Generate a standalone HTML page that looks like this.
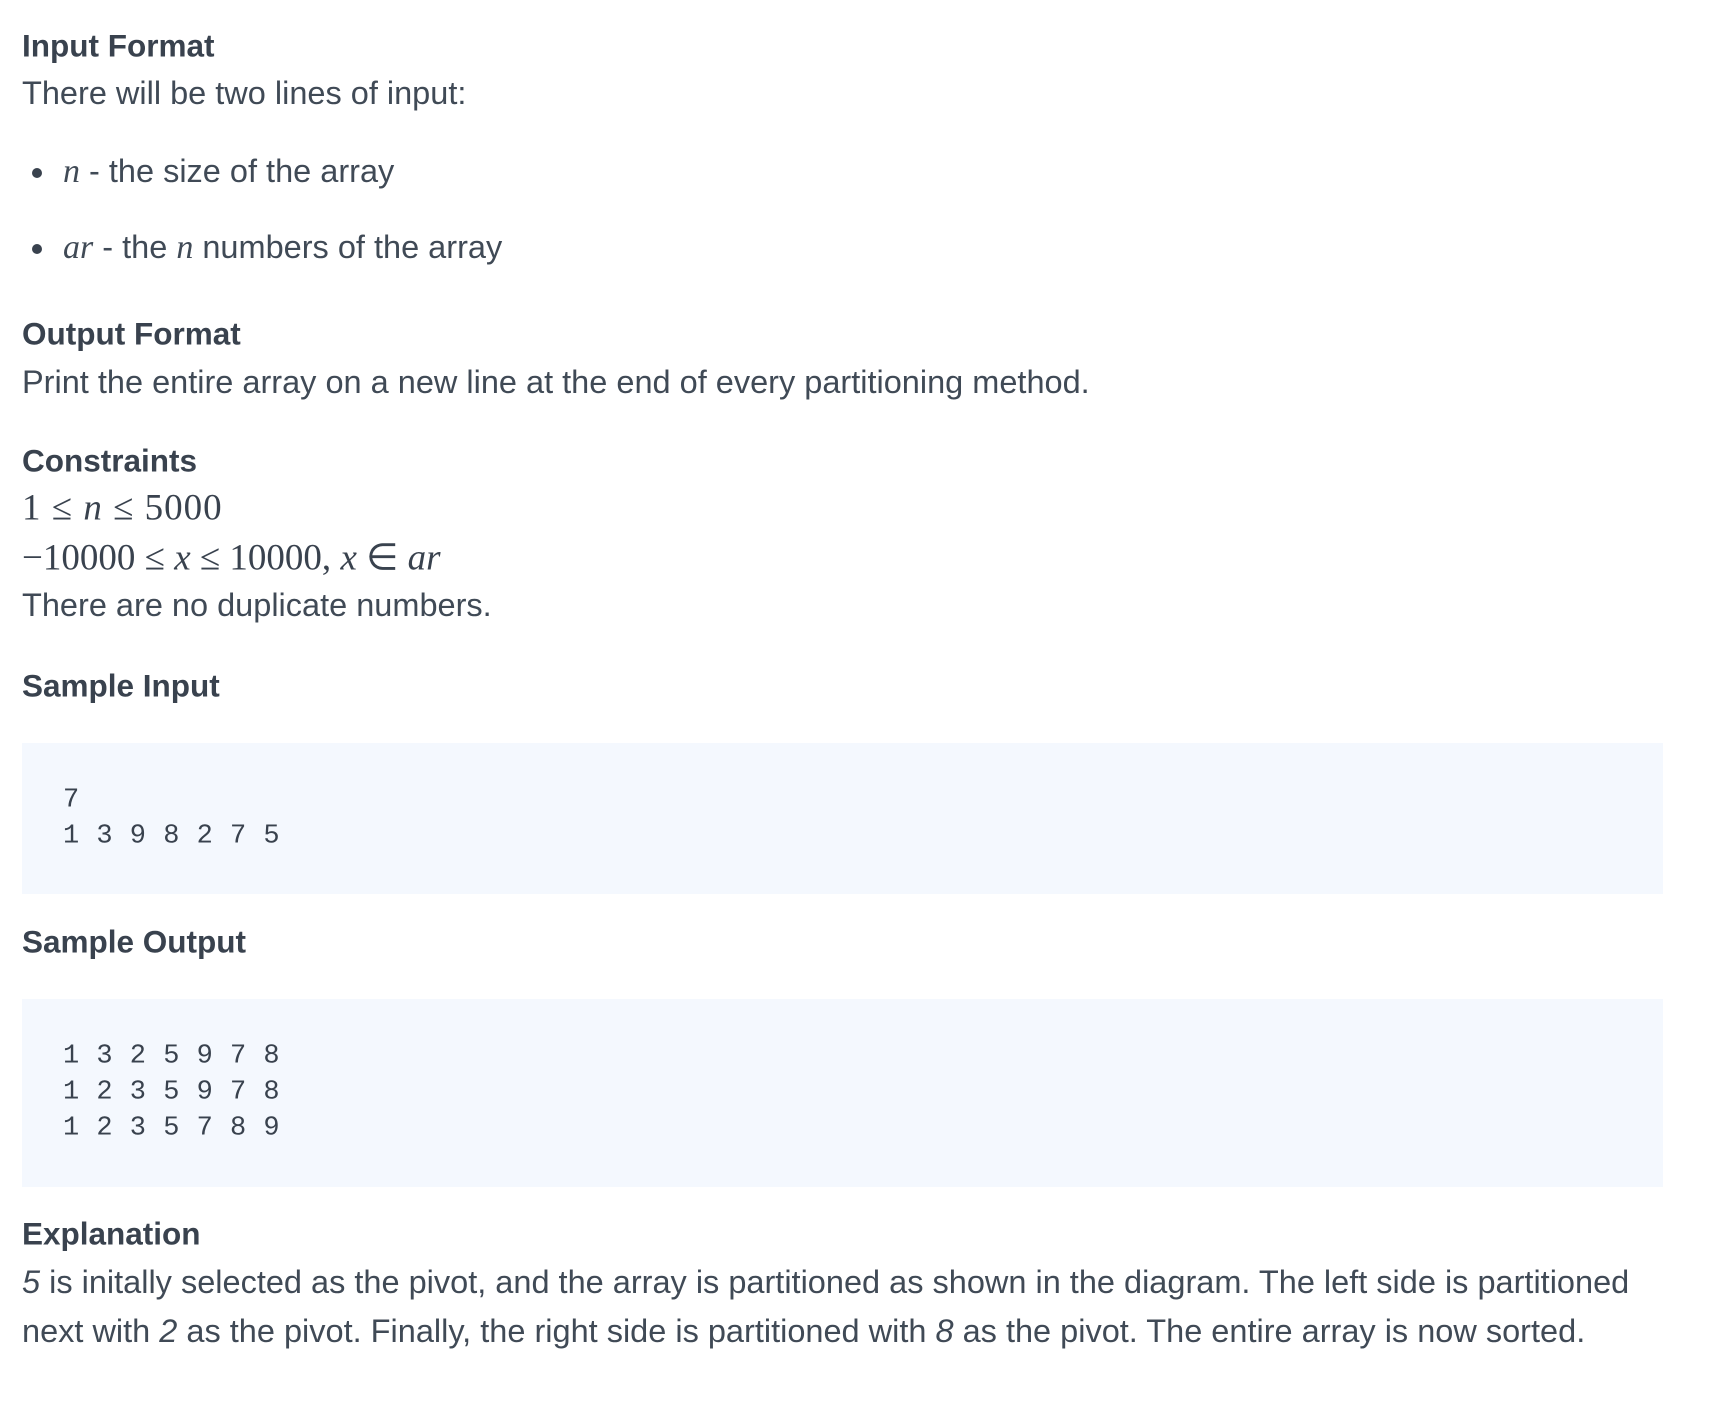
<!DOCTYPE html>
<html><head><meta charset="utf-8"><style>
body{margin:0;width:1714px;height:1408px;background:#fff;position:relative;overflow:hidden;font-family:"Liberation Sans",sans-serif;color:#39424e}
.a{position:absolute;white-space:nowrap;line-height:1;transform:translateY(-50%)}
.h{font-weight:bold;font-size:31.5px;left:22px}
.t{font-size:32.5px;left:22px;color:#404a56}
.m{font-family:"Liberation Serif",serif;font-size:37px}
.i{font-style:italic}
.box{position:absolute;left:22px;width:1641px;background:#f4f8fe}
.c{font-family:"Liberation Mono",monospace;font-size:27px;left:63px;letter-spacing:0.5px}
.dot{position:absolute;width:10px;height:10px;border-radius:50%;background:#39424e;left:32px}
</style></head><body>
<div class="a h" style="top:46px">Input Format</div>
<div class="a t" style="top:93px">There will be two lines of input:</div>
<div class="dot" style="top:168px"></div>
<div class="a t" style="top:172px;left:63px"><span class="m i" style="font-size:34px">n</span> - the size of the array</div>
<div class="dot" style="top:244px"></div>
<div class="a t" style="top:248px;left:63px"><span class="m i" style="font-size:34px">ar</span> - the <span class="m i" style="font-size:34px">n</span> numbers of the array</div>
<div class="a h" style="top:334px">Output Format</div>
<div class="a t" style="top:382px">Print the entire array on a new line at the end of every partitioning method.</div>
<div class="a h" style="top:461px">Constraints</div>
<div class="a m" style="top:508px;left:22px;letter-spacing:1px">1 ≤ <i>n</i> ≤ 5000</div>
<div class="a m" style="top:558px;left:22px">−10000 ≤ <i>x</i> ≤ 10000, <i>x</i> ∈ <i>ar</i></div>
<div class="a t" style="top:605px">There are no duplicate numbers.</div>
<div class="a h" style="top:686px">Sample Input</div>
<div class="box" style="top:743px;height:151px"></div>
<div class="a c" style="top:801px">7</div>
<div class="a c" style="top:837px">1 3 9 8 2 7 5</div>
<div class="a h" style="top:942px">Sample Output</div>
<div class="box" style="top:999px;height:188px"></div>
<div class="a c" style="top:1057px">1 3 2 5 9 7 8</div>
<div class="a c" style="top:1093px">1 2 3 5 9 7 8</div>
<div class="a c" style="top:1129px">1 2 3 5 7 8 9</div>
<div class="a h" style="top:1234px">Explanation</div>
<div class="a t" style="top:1282px"><i>5</i> is initally selected as the pivot, and the array is partitioned as shown in the diagram. The left side is partitioned</div>
<div class="a t" style="top:1331px">next with <i>2</i> as the pivot. Finally, the right side is partitioned with <i>8</i> as the pivot. The entire array is now sorted.</div>
</body></html>
